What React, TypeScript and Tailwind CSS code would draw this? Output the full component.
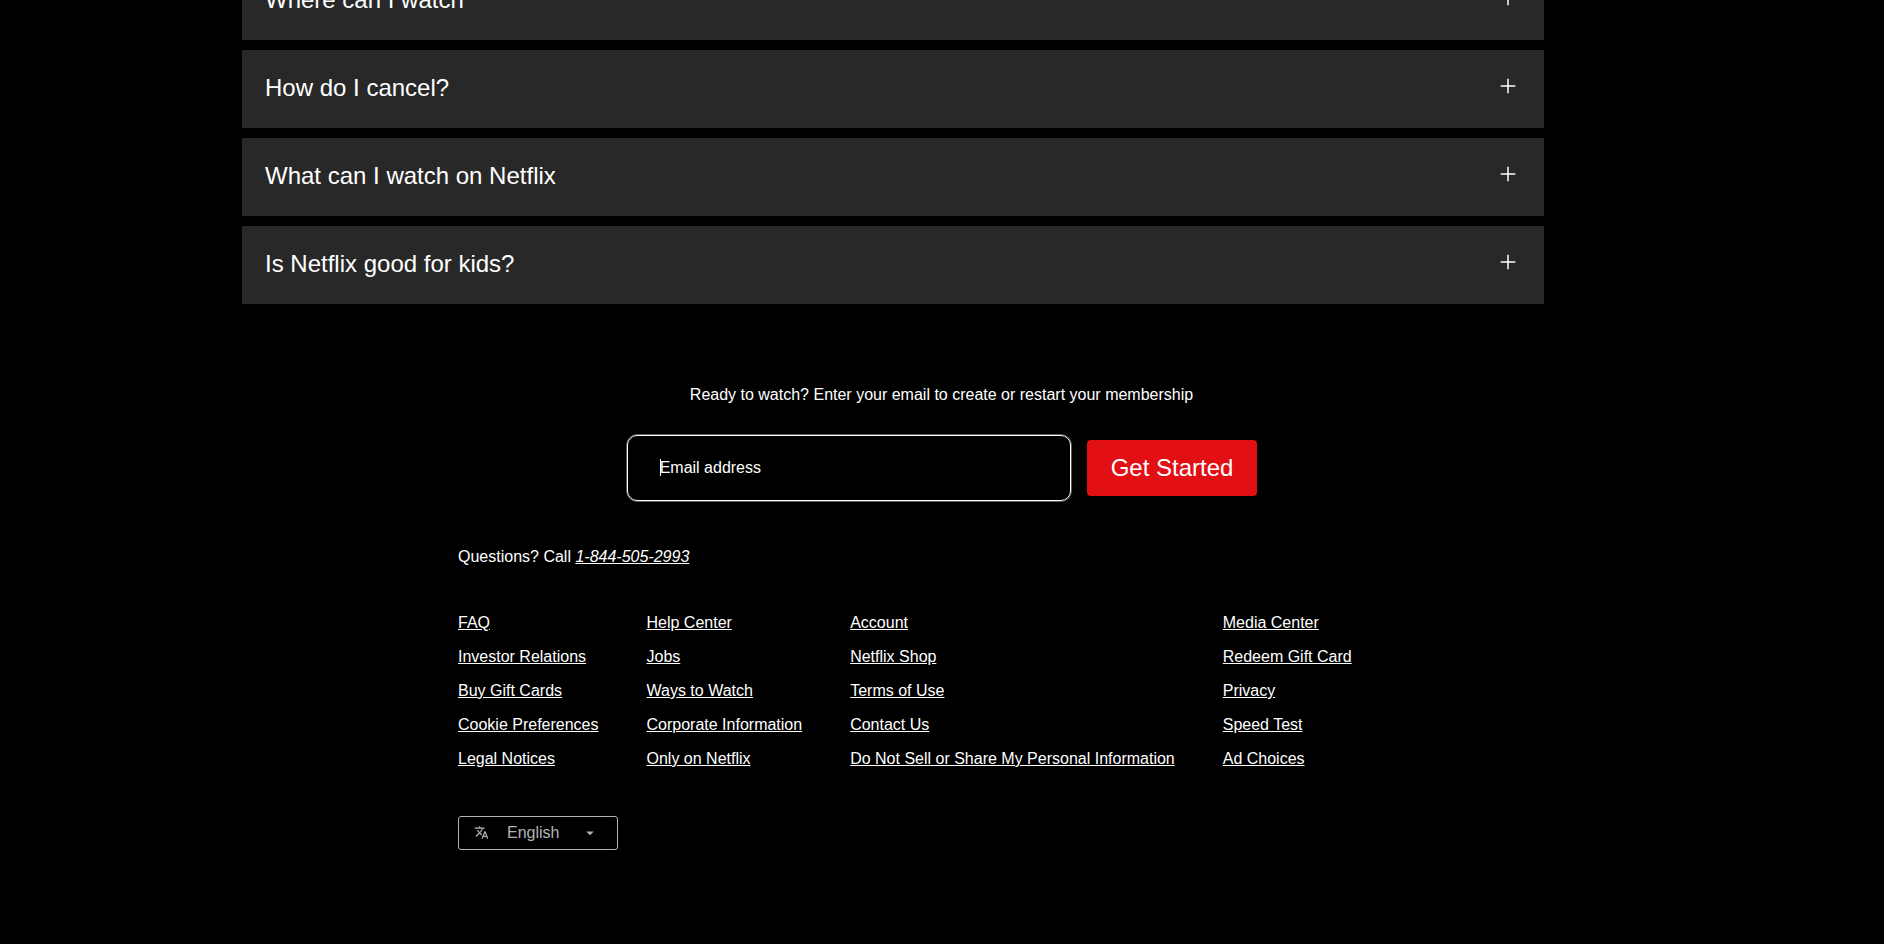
import { MdArrowDropDown, MdTranslate } from "react-icons/md";

const questions = [
  "Where can I watch",
  "How do I cancel?",
  "What can I watch on Netflix",
  "Is Netflix good for kids?",
];

const linkColumns = [
  ["FAQ", "Investor Relations", "Buy Gift Cards", "Cookie Preferences", "Legal Notices"],
  ["Help Center", "Jobs", "Ways to Watch", "Corporate Information", "Only on Netflix"],
  [
    "Account",
    "Netflix Shop",
    "Terms of Use",
    "Contact Us",
    "Do Not Sell or Share My Personal Information",
  ],
  ["Media Center", "Redeem Gift Card", "Privacy", "Speed Test", "Ad Choices"],
];

function PlusIcon() {
  return (
    <svg viewBox="0 0 24 24" className="mt-0.5 size-6" aria-hidden="true">
      <path d="M12 4.7v14.6M4.7 12h14.6" stroke="white" strokeWidth="1.5" fill="none" />
    </svg>
  );
}

function FaqItem({ title }: { title: string }) {
  return (
    <li>
      <button
        type="button"
        aria-expanded="false"
        className="flex w-full items-start justify-between bg-[#282828] pt-[22px] pr-6 pb-6 pl-[23px] text-left text-2xl"
      >
        <span>{title}</span>
        <PlusIcon />
      </button>
    </li>
  );
}

function SignUpForm() {
  return (
    <form className="mt-[79px] flex flex-col items-center gap-[27px] pr-px" onSubmit={(e) => e.preventDefault()}>
      <label htmlFor="email">Ready to watch? Enter your email to create or restart your membership</label>
      <div className="flex items-center gap-[15px]">
        <div className="relative rounded-[11px] border border-[#5c5c5c]">
          <input
            id="email"
            type="email"
            placeholder="Email address"
            className="block h-[66px] w-[444px] rounded-[10px] border border-white bg-black px-8 text-white caret-transparent outline-none placeholder:text-white placeholder:opacity-100"
          />
          <span className="pointer-events-none absolute top-6 left-[33px] h-[17px] w-px bg-white" />
        </div>
        <button type="submit" className="h-14 rounded bg-[#e20f15] px-6 text-2xl">
          Get Started
        </button>
      </div>
    </form>
  );
}

function Footer() {
  return (
    <footer className="mt-[43px] pb-[94px] pl-[458px]">
      <p>
        Questions? Call{" "}
        <a href="tel:1-844-505-2993" className="italic underline">
          1-844-505-2993
        </a>
      </p>
      <nav className="mt-[42px] flex gap-12">
        {linkColumns.map((links) => (
          <ul key={links[0]} className="flex flex-col gap-2.5">
            {links.map((link) => (
              <li key={link}>
                <a href="#" className="underline">
                  {link}
                </a>
              </li>
            ))}
          </ul>
        ))}
      </nav>
      <div className="relative mt-[45px] w-fit text-[#b3b3b3]">
        <select
          aria-label="Language"
          className="block h-[34px] w-40 appearance-none rounded-[3px] border border-[#b3b3b3] bg-black pl-12"
        >
          <option>English</option>
        </select>
        <MdTranslate className="pointer-events-none absolute top-[9px] left-4 size-[15px]" aria-hidden="true" />
        <MdArrowDropDown className="pointer-events-none absolute top-2 right-[19px] size-[18px]" aria-hidden="true" />
      </div>
    </footer>
  );
}

export default function App() {
  return (
    <div className="min-h-screen overflow-hidden bg-black font-['Liberation_Sans',Arial,sans-serif] text-base text-white">
      <main>
        <ul className="-mt-[38px] flex flex-col gap-2.5 pr-[340px] pl-[242px]">
          {questions.map((title) => (
            <FaqItem key={title} title={title} />
          ))}
        </ul>
        <SignUpForm />
      </main>
      <Footer />
    </div>
  );
}
